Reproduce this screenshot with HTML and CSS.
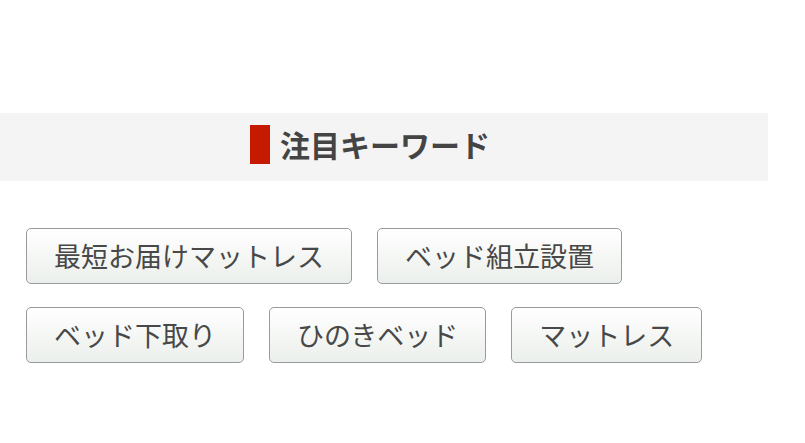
FILE: index.html
```html
<!DOCTYPE html>
<html lang="ja">
<head>
  <meta charset="UTF-8">
  <meta name="viewport" content="width=device-width, initial-scale=1.0">
  <title>注目キーワード</title>
  <link rel="stylesheet" href="styles.css">
</head>
<body>
  <div class="wrapper">
    <section class="keywords">
      <h2 class="keywords-title"><span class="title-bar"></span>注目キーワード</h2>
      <ul class="keyword-list">
        <li><a class="keyword" href="#">最短お届けマットレス</a></li>
        <li><a class="keyword" href="#">ベッド組立設置</a></li>
        <li><a class="keyword" href="#">ベッド下取り</a></li>
        <li><a class="keyword" href="#">ひのきベッド</a></li>
        <li><a class="keyword" href="#">マットレス</a></li>
      </ul>
    </section>
  </div>
</body>
</html>
```

FILE: styles.css
```css
body {
  font-family: "Noto Sans CJK JP", "Noto Sans", sans-serif;
  background-color: #ffffff;
  color: #444444;
  margin: 0;
  padding: 0;
}
.wrapper {
  width: 768px;
  padding-top: 113px;
}
.keywords-title {
  display: flex;
  justify-content: center;
  align-items: center;
  box-sizing: border-box;
  height: 68px;
  margin: 0;
  padding: 0 28px 6px 0;
  background-color: #f4f4f4;
  font-size: 30px;
  font-weight: bold;
  line-height: 1;
  color: #444444;
}
.title-bar {
  display: block;
  width: 20px;
  height: 39px;
  margin-right: 10px;
  background-color: #c61a00;
}
.keyword-list {
  list-style: none;
  display: flex;
  flex-wrap: wrap;
  gap: 23px 25px;
  margin: 47px 0 0;
  padding: 0 0 0 26px;
}
.keyword {
  display: block;
  height: 54px;
  padding: 0 27px;
  border: 1px solid #9a9a9a;
  border-radius: 5px;
  background: linear-gradient(to bottom, #ffffff, #ebefeb);
  font-size: 27px;
  line-height: 54px;
  color: #484848;
  text-decoration: none;
}
```
